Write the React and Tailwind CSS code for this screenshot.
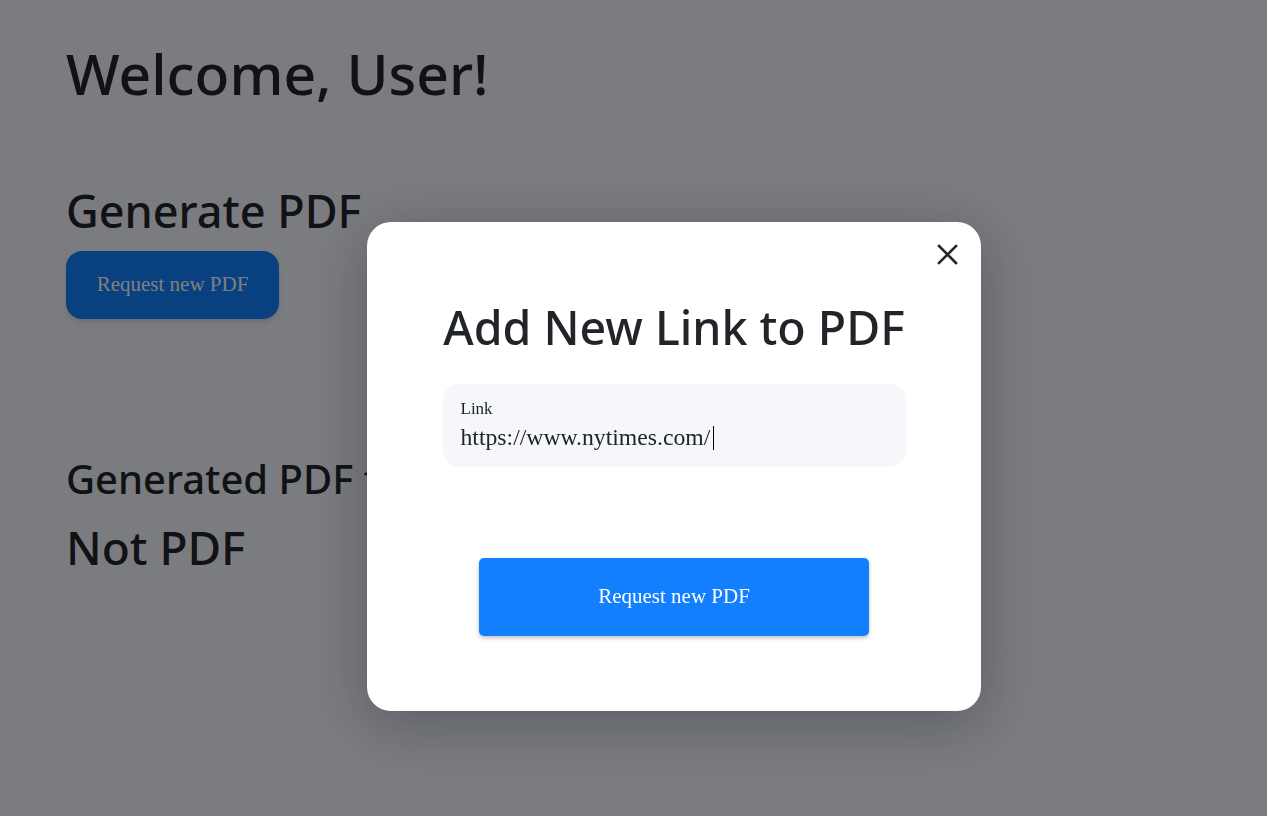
export default function App() {
  return (
    <div className="relative min-h-[816px] bg-[#f6f8ff] text-[#212529] font-['Noto_Sans','Open_Sans',sans-serif]">
      {/* Page content */}
      <main className="pl-[66px] pt-[45px]">
        <h1 className="text-[57px] leading-none font-medium">Welcome, User!</h1>

        <section className="mt-[86px]">
          <h2 className="text-[45px] leading-none font-medium">Generate PDF</h2>
          <button className="mt-[18px] w-[213px] h-[68px] rounded-2xl bg-[#1280ff] text-white text-[21px] font-['Liberation_Serif',serif] shadow-md">
            Request new PDF
          </button>
        </section>

        <section className="mt-[140px]">
          <h3 className="text-[40px] leading-none font-medium">Generated PDF file:</h3>
          <p className="mt-[25px] text-[46px] leading-none font-medium">Not PDF</p>
        </section>
      </main>

      {/* Modal */}
      <div className="fixed inset-0 bg-black/50">
        <div className="absolute left-[367px] top-[222px] w-[614px] rounded-3xl bg-white pt-[82px] pb-[75px] shadow-[0_12px_60px_rgba(15,25,45,0.32)]">
          <button className="absolute right-[23px] top-[22px] w-[21px] h-[21px] text-[#212529]" aria-label="Close">
            <svg viewBox="0 0 21 21" className="w-[21px] h-[21px]" fill="none" stroke="currentColor" strokeWidth="2.6" strokeLinecap="square">
              <path d="M2 2L19 19M19 2L2 19" />
            </svg>
          </button>

          <h2 className="text-center text-[46.5px] leading-none font-medium">Add New Link to PDF</h2>

          <div className="mx-auto mt-[33px] w-[463px] h-[83px] rounded-2xl bg-[#f6f7fb] px-[18px] pt-[16px] font-['Liberation_Serif',serif]">
            <label className="block text-[17px] leading-none text-[#212529]">Link</label>
            <div className="mt-[9px] flex items-center text-[23.7px] leading-none text-[#212529]">
              <span>https://www.nytimes.com/</span>
              <span className="ml-[3px] inline-block w-px h-[24px] bg-black" />
            </div>
          </div>

          <button className="mx-auto mt-[91px] flex items-center justify-center w-[390px] h-[78px] rounded-[5px] bg-[#127ffe] text-white text-[21px] font-['Liberation_Serif',serif] shadow-[0_2px_4px_rgba(0,0,0,0.25)]">
            Request new PDF
          </button>
        </div>
      </div>
    </div>
  );
}
